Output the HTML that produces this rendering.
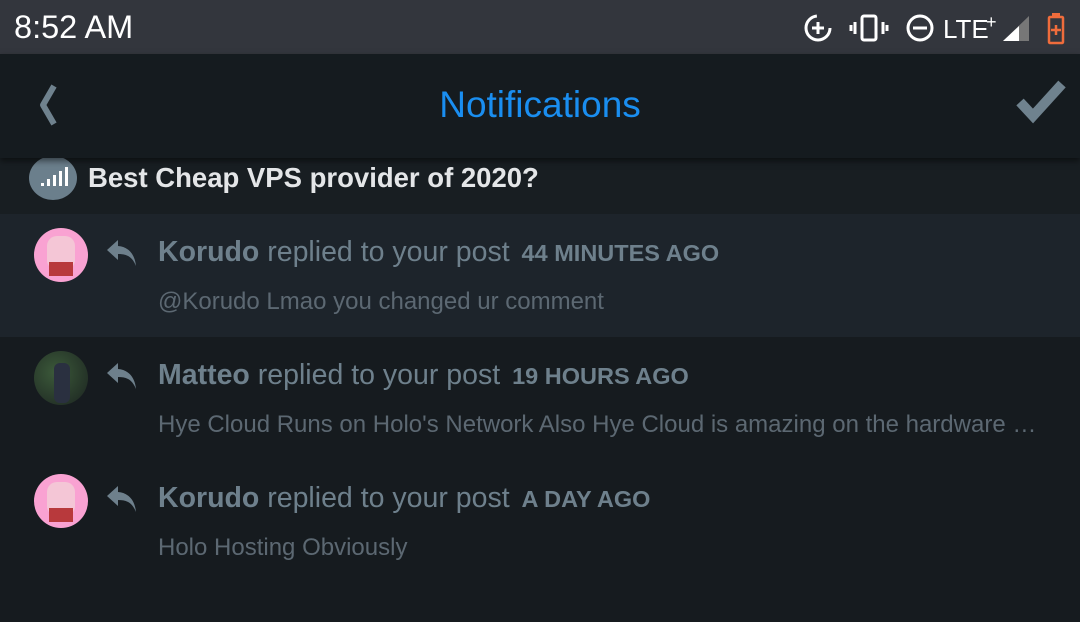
<!DOCTYPE html>
<html><head><meta charset="utf-8"><style>
*{margin:0;padding:0;box-sizing:border-box}
body{width:1080px;height:622px;overflow:hidden;background:#161b1f;font-family:"Liberation Sans",sans-serif;position:relative}
.sb{position:absolute;left:0;top:0;width:1080px;height:54px;background:#33363d;color:#fff}
.time{position:absolute;left:14px;top:9px;font-size:32.5px}
.hdr{position:absolute;left:0;top:54px;width:1080px;height:104px;background:#151b1f;box-shadow:0 3px 6px rgba(0,0,0,.5);z-index:2}
.title{position:absolute;left:0;right:0;top:30px;text-align:center;color:#1a8ef0;font-size:37px}
.topic{position:absolute;left:0;top:158px;width:1080px;height:56px;background:#181e22}
.topic .t{position:absolute;left:88px;top:4px;color:#e4e6e8;font-weight:bold;font-size:27.5px}
.ti{position:absolute;left:29px;top:-2px;width:48px;height:44px;border-radius:50%;background:#6b7f8c}
.row{position:absolute;left:0;width:1080px;height:123px}
.av{position:absolute;left:34px;top:14px;width:54px;height:54px;border-radius:50%;overflow:hidden}
.rp{position:absolute;left:104px;top:22px}
.l1{position:absolute;left:158px;top:22px;color:#6e808c;font-size:28.5px;white-space:nowrap}
.l1 b{font-weight:bold}
.l1 .ago{font-size:23.5px;font-weight:bold;margin-left:4px}
.l2{position:absolute;left:158px;top:74px;color:#5c6872;font-size:24px;white-space:nowrap}
</style></head><body>
<div class="sb"><div class="time">8:52 AM</div>
<svg style="position:absolute;left:800px;top:10px" width="270" height="36" viewBox="0 0 270 36">
<circle cx="18" cy="18" r="12" fill="none" stroke="#fff" stroke-width="3" stroke-dasharray="55 100"/>
<path d="M12 18h12M18 12v12" stroke="#fff" stroke-width="3"/>
<rect x="62" y="6" width="14" height="24" rx="2" fill="none" stroke="#fff" stroke-width="3"/>
<path d="M55 12v12M83 12v12M51 15v6M87 15v6" stroke="#fff" stroke-width="3"/>
<circle cx="120" cy="18" r="12" fill="none" stroke="#fff" stroke-width="3"/><path d="M113 18h14" stroke="#fff" stroke-width="3"/>
<text x="143" y="28" fill="#fff" font-size="26" font-family="Liberation Sans">LTE</text><text x="186" y="18" fill="#fff" font-size="18" font-family="Liberation Sans">+</text>
<path d="M203 31L229 6V31Z" fill="#777"/><path d="M203 31L219 16V31Z" fill="#fff"/>
<rect x="249" y="7" width="14" height="26" rx="1" fill="none" stroke="#ef6c3c" stroke-width="2.5"/><rect x="252" y="3" width="8" height="4" fill="#ef6c3c"/>
<path d="M251 20h10M256 15v10" stroke="#ef6c3c" stroke-width="2.5"/>
</svg></div>
<div class="hdr">
<svg style="position:absolute;left:30px;top:28px" width="32" height="46"><path d="M24 4L13 23L24 42" fill="none" stroke="#6f828e" stroke-width="6" stroke-linejoin="round"/></svg>
<div class="title">Notifications</div>
<svg style="position:absolute;left:1014px;top:26px" width="54" height="46"><path d="M6 22L19 36L48 4" fill="none" stroke="#6f828e" stroke-width="10"/></svg>
</div>
<div class="topic"><div class="ti"><svg width="48" height="44"><path d="M12 30h3v-3h-3zM18 30h3v-7h-3zM24 30h3v-11h-3zM30 30h3v-15h-3zM36 30h3v-19h-3z" fill="#fff"/></svg></div><div class="t">Best Cheap VPS provider of 2020?</div></div>
<div class="row" style="top:214px;background:#1d242b">
<div class="av" style="background:#f9a2d2"><div style="position:absolute;left:13px;top:8px;width:28px;height:34px;background:#f4c6d6;border-radius:10px"></div><div style="position:absolute;left:15px;top:34px;width:24px;height:14px;background:#b8393c"></div></div>
<svg class="rp" width="36" height="36"><path d="M14 4L3 14L14 24V18C22 18 28 20 32 30C31 20 26 11 14 10Z" fill="#6e808c"/></svg>
<div class="l1"><b>Korudo</b> replied to your post <span class="ago">44 MINUTES AGO</span></div>
<div class="l2">@Korudo Lmao you changed ur comment</div></div>
<div class="row" style="top:337px">
<div class="av" style="background:radial-gradient(circle at 40% 40%,#3c5a3a,#1b2320)"><div style="position:absolute;left:20px;top:12px;width:16px;height:40px;background:#2a3040;border-radius:6px"></div></div>
<svg class="rp" width="36" height="36"><path d="M14 4L3 14L14 24V18C22 18 28 20 32 30C31 20 26 11 14 10Z" fill="#6e808c"/></svg>
<div class="l1"><b>Matteo</b> replied to your post <span class="ago">19 HOURS AGO</span></div>
<div class="l2">Hye Cloud Runs on Holo's Network Also Hye Cloud is amazing on the hardware …</div></div>
<div class="row" style="top:460px">
<div class="av" style="background:#f9a2d2"><div style="position:absolute;left:13px;top:8px;width:28px;height:34px;background:#f4c6d6;border-radius:10px"></div><div style="position:absolute;left:15px;top:34px;width:24px;height:14px;background:#b8393c"></div></div>
<svg class="rp" width="36" height="36"><path d="M14 4L3 14L14 24V18C22 18 28 20 32 30C31 20 26 11 14 10Z" fill="#6e808c"/></svg>
<div class="l1"><b>Korudo</b> replied to your post <span class="ago">A DAY AGO</span></div>
<div class="l2">Holo Hosting Obviously</div></div>
</body></html>
